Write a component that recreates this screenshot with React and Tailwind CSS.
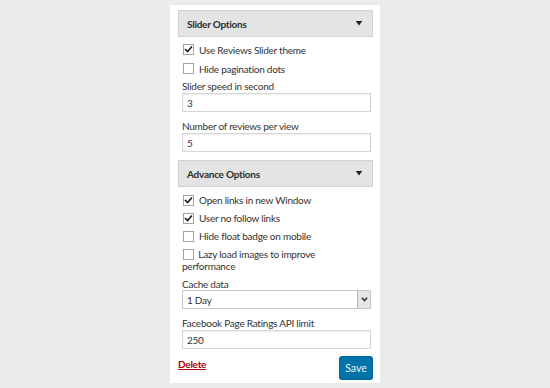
import React from 'react';

function Check({ checked }) {
  return (
    <span className="inline-flex items-center justify-center w-[11px] h-[11px] border border-[#a3a3a3] bg-white shrink-0 align-[-2px]">
      {checked && (
        <svg width="9" height="9" viewBox="0 0 9 9" fill="none">
          <path d="M1.6 4.6 L3.6 6.6 L7.4 2.2" stroke="#1f1f1f" strokeWidth="1.7" strokeLinecap="square" />
        </svg>
      )}
    </span>
  );
}

function CheckRow({ checked, children }) {
  return (
    <div className="h-[18px] flex items-center gap-[5px]">
      <Check checked={checked} />
      <span>{children}</span>
    </div>
  );
}

function Section({ title }) {
  return (
    <div className="mx-[8px] mr-[7px] h-[27px] flex items-center justify-between pl-[8px] pr-[10px] bg-[#e4e4e4] border border-[#d2d2d2] font-bold text-[#2d2d2d]">
      <span>{title}</span>
      <svg width="6" height="5" viewBox="0 0 6 5">
        <path d="M0 0 H6 V1 H0 Z M0.5 1 H5.5 L3 4.5 Z" fill="#222" />
      </svg>
    </div>
  );
}

function Field({ value }) {
  return (
    <div className="h-[19px] border border-[#d6d6d6] shadow-[inset_0_1px_2px_rgba(0,0,0,0.07)] bg-white flex items-center pl-[4px]">
      {value}
    </div>
  );
}

export default function App() {
  return (
    <div className="w-[550px] h-[388px] bg-[#ebebeb] pt-[5px] text-[10px] tracking-[-0.25px] text-[#333] font-['Lato','Open_Sans',sans-serif] leading-[14px]">
      <div className="mx-auto w-[210px] h-[378px] bg-white pt-[5px]">
        <Section title="Slider Options" />
        <div className="pl-[12px] pr-[9px]">
          <div className="pt-[3px]">
            <div className="h-[19px] flex items-center gap-[5px] pl-[1px]"><Check checked /><span>Use Reviews Slider theme</span></div>
            <div className="h-[19px] flex items-center gap-[5px] pl-[1px]"><Check /><span>Hide pagination dots</span></div>
          </div>
          <div className="mt-[1px] h-[14px]">Slider speed in second</div>
          <Field value="3" />
          <div className="mt-[7px] h-[14px]">Number of reviews per view</div>
          <Field value="5" />
        </div>
        <div className="mt-[8px]">
          <Section title="Advance Options" />
        </div>
        <div className="pl-[12px] pr-[9px]">
          <div className="pt-[4px]">
            <div className="pl-[1px]">
              <CheckRow checked>Open links in new Window</CheckRow>
              <CheckRow checked>User no follow links</CheckRow>
              <CheckRow>Hide float badge on mobile</CheckRow>
            </div>
            <div className="mt-[3px] leading-[12px] pr-[50px]">
              <span className="ml-[1px]"><Check /></span> <span className="ml-[2px]">Lazy load images to improve performance</span>
            </div>
          </div>
          <div className="mt-[5px] h-[13px]">Cache data</div>
          <div className="h-[19px] border border-[#c8c8c8] bg-white flex items-stretch">
            <span className="flex-1 flex items-center pl-[4px]">1 Day</span>
            <span className="w-[13px] bg-[#e6e6e6] border-l border-[#b5b5b5] flex items-center justify-center">
              <svg width="7" height="5" viewBox="0 0 7 5" fill="none">
                <path d="M0.8 0.8 L3.5 3.6 L6.2 0.8" stroke="#333" strokeWidth="1.6" />
              </svg>
            </span>
          </div>
          <div className="mt-[7px] h-[14px]">Facebook Page Ratings API limit</div>
          <Field value="250" />
        </div>
        <div className="mt-[7px] pl-[8px] pr-[7px] flex items-start justify-between">
          <a href="#" className="mt-[1px] text-[#a00] underline font-bold">Delete</a>
          <button className="h-[23px] w-[34px] rounded-[3px] bg-[#0073aa] border border-[#006799] text-[#e8f2f8] shadow-[0_1px_0_#006799] text-[10.5px] tracking-normal">Save</button>
        </div>
      </div>
    </div>
  );
}
